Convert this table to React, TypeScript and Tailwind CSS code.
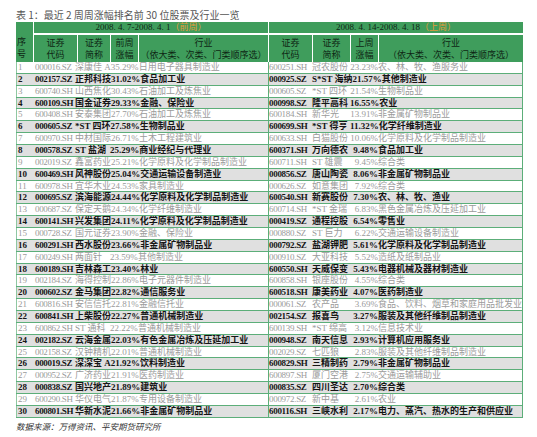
import React from 'react';
import clsx from 'clsx';

type Row = [string, string, string, string];

// 前周 2008.4.7-2008.4.11
const prevWeek: Row[] = [
  ['000016.SZ', '深康佳 A', '35.29%', '日用电子器具制造业'],
  ['002157.SZ', '正邦科技', '31.02%', '食品加工业'],
  ['600740.SH', '山西焦化', '30.43%', '石油加工及炼焦业'],
  ['600109.SH', '国金证券', '29.33%', '金融、保险业'],
  ['600408.SH', '安泰集团', '27.70%', '石油加工及炼焦业'],
  ['000605.SZ', '*ST 四环', '27.58%', '生物制品业'],
  ['600970.SH', '中材国际', '26.71%', '土木工程建筑业'],
  ['000578.SZ', 'ST 盐湖', '25.29%', '商业经纪与代理业'],
  ['002019.SZ', '鑫富药业', '25.21%', '化学原料及化学制品制造业'],
  ['600469.SH', '风神股份', '25.04%', '交通运输设备制造业'],
  ['600978.SH', '宜华木业', '24.53%', '家具制造业'],
  ['000695.SZ', '滨海能源', '24.44%', '化学原料及化学制品制造业'],
  ['000687.SZ', '保定天鹅', '24.34%', '化学纤维制造业'],
  ['600141.SH', '兴发集团', '24.11%', '化学原料及化学制品制造业'],
  ['000728.SZ', '国元证券', '23.90%', '金融、保险业'],
  ['600291.SH', '西水股份', '23.66%', '非金属矿物制品业'],
  ['600249.SH', '两面针', '23.59%', '其他制造业'],
  ['600189.SH', '吉林森工', '23.40%', '林业'],
  ['002184.SZ', '海得控制', '22.86%', '电子元器件制造业'],
  ['000602.SZ', '金马集团', '22.82%', '通信服务业'],
  ['600816.SH', '安信信托', '22.81%', '金融信托业'],
  ['600841.SH', '上柴股份', '22.27%', '普通机械制造业'],
  ['600862.SH', 'ST 通科', '22.22%', '普通机械制造业'],
  ['002182.SZ', '云海金属', '22.03%', '有色金属冶炼及压延加工业'],
  ['002158.SZ', '汉钟精机', '22.01%', '普通机械制造业'],
  ['000019.SZ', '深深宝 A', '21.92%', '饮料制造业'],
  ['000952.SZ', '广济药业', '21.91%', '医药制造业'],
  ['000838.SZ', '国兴地产', '21.89%', '建筑业'],
  ['600290.SH', '华仪电气', '21.87%', '专用设备制造业'],
  ['600801.SH', '华新水泥', '21.66%', '非金属矿物制品业'],
];

// 上周 2008.4.14-2008.4.18
const lastWeek: Row[] = [
  ['600251.SH', '冠农股份', '23.23%', '农、林、牧、渔服务业'],
  ['000925.SZ', 'S*ST 海纳', '21.57%', '其他制造业'],
  ['000605.SZ', '*ST 四环', '21.54%', '生物制品业'],
  ['000998.SZ', '隆平高科', '16.55%', '农业'],
  ['600184.SH', '新华光', '13.91%', '非金属矿物制品业'],
  ['600699.SH', '*ST 得亨', '11.32%', '化学纤维制造业'],
  ['600633.SH', '白猫股份', '10.06%', '化学原料及化学制品制造业'],
  ['600371.SH', '万向德农', '9.48%', '食品加工业'],
  ['600711.SH', 'ST 雄震', '9.45%', '综合类'],
  ['000856.SZ', '唐山陶瓷', '8.06%', '非金属矿物制品业'],
  ['000626.SZ', '如意集团', '7.92%', '综合类'],
  ['600540.SH', '新赛股份', '7.30%', '农、林、牧、渔业'],
  ['600714.SH', '*ST 金瑞', '6.83%', '黑色金属冶炼及压延加工业'],
  ['000419.SZ', '通程控股', '6.54%', '零售业'],
  ['000880.SZ', 'ST 巨力', '6.22%', '交通运输设备制造业'],
  ['000792.SZ', '盐湖钾肥', '5.61%', '化学原料及化学制品制造业'],
  ['000910.SZ', '大亚科技', '5.52%', '造纸及纸制品业'],
  ['600550.SH', '天威保变', '5.43%', '电器机械及器材制造业'],
  ['600858.SH', '银座股份', '4.55%', '综合类'],
  ['600518.SH', '康美药业', '4.07%', '医药制造业'],
  ['000061.SZ', '农产品', '3.69%', '食品、饮料、烟草和家庭用品批发业'],
  ['002154.SZ', '报喜鸟', '3.27%', '服装及其他纤维制品制造业'],
  ['600139.SH', '*ST 绵高', '3.12%', '信息技术业'],
  ['000948.SZ', '南天信息', '2.93%', '计算机应用服务业'],
  ['002029.SZ', '七匹狼', '2.83%', '服装及其他纤维制品制造业'],
  ['600829.SH', '三精制药', '2.79%', '非金属矿物制品业'],
  ['600897.SH', '厦门空港', '2.75%', '交通运输辅助业'],
  ['000835.SZ', '四川圣达', '2.70%', '综合类'],
  ['000972.SZ', '新中基', '2.61%', '农业'],
  ['600116.SH', '三峡水利', '2.17%', '电力、蒸汽、热水的生产和供应业'],
];

const HeadCell = ({ w, top, bottom, last }: { w: string; top: string; bottom: string; last?: boolean }) => (
  <div className={clsx('flex flex-col items-center justify-center border-l border-white', w, last && 'flex-1')}>
    <span>{top}</span>
    <span>{bottom}</span>
  </div>
);

const App: React.FC = () => {
  return (
    <div className="w-[537px] h-[437px] bg-white pt-[7px] pl-[16px] font-['Liberation_Serif','Noto_Sans_CJK_SC',serif]">
      {/* title */}
      <div className="h-[15px] leading-[15px] text-[10px] text-[#555] font-['Noto_Sans_CJK_SC',sans-serif]">
        表 1：最近 2 周周涨幅排名前 30 位股票及行业一览
      </div>

      <div className="w-[507px]">
        {/* header */}
        <div className="flex h-[40px] bg-[#3f9d5c] text-[9px] text-[#0e2614]">
          <div className="w-[17px] flex flex-col justify-end pb-[2px] pl-[1px] leading-[12px]">
            <span>序</span>
            <span>号</span>
          </div>

          <div className="w-[235px] flex flex-col border-l border-white">
            <div className="h-[11px] leading-[11px] text-center">
              2008. 4. 7-2008. 4. 1<span className="text-[#e39a3a]">（前周）</span>
            </div>
            <div className="h-[2px] bg-white" />
            <div className="flex flex-1 leading-[12px] -ml-px">
              <HeadCell w="w-[44px]" top="证券" bottom="代码" />
              <HeadCell w="w-[33px]" top="证券" bottom="简称" />
              <HeadCell w="w-[28px]" top="前周" bottom="涨幅" />
              <HeadCell w="" top="行业" bottom="（依大类、次类、门类顺序选）" last />
            </div>
          </div>

          <div className="w-[255px] flex flex-col border-l border-white">
            <div className="h-[11px] leading-[11px] text-center">
              2008. 4. 14-2008. 4. 18<span className="text-[#e39a3a]">（上周）</span>
            </div>
            <div className="h-[2px] bg-white" />
            <div className="flex flex-1 leading-[12px] -ml-px">
              <HeadCell w="w-[44px]" top="证券" bottom="代码" />
              <HeadCell w="w-[38px]" top="证券" bottom="简称" />
              <HeadCell w="w-[28px]" top="上周" bottom="涨幅" />
              <HeadCell w="" top="行业" bottom="（依大类、次类、门类顺序选）" last />
            </div>
          </div>
        </div>

        {/* rows */}
        {prevWeek.map((l, i) => {
          const r = lastWeek[i];
          const strong = i % 2 === 1;
          return (
            <div
              key={i}
              className={clsx(
                'flex h-[11.87px] leading-[11px] text-[9px] whitespace-nowrap border-b border-[#5cae79]',
                strong ? 'bg-[#e0e0e0] font-bold text-[#151515]' : 'bg-white text-[#9b9b9b]'
              )}
            >
              <div className="w-[17px] pl-[1px] border-l border-[#8fc7a2]">{i + 1}</div>
              <div className="w-[235px] flex pl-[2px] overflow-hidden">
                <span className="min-w-[40px] tracking-[-0.35px]">{l[0]}</span>
                <span className="min-w-[35px]">{l[1]}</span>
                <span className="min-w-[28px]">{l[2]}</span>
                <span>{l[3]}</span>
              </div>
              <div className="w-[255px] flex overflow-hidden border-l border-[#5cae79] border-r">
                <span className="min-w-[43px] tracking-[-0.3px]">{r[0]}</span>
                <span className="min-w-[38px]">{r[1]}</span>
                <span className="min-w-[28px] text-right">{r[2]}</span>
                <span>{r[3]}</span>
              </div>
            </div>
          );
        })}
      </div>

      {/* source */}
      <div className="mt-[2px] h-[12px] leading-[12px] text-[8.5px] italic text-[#333] font-['Noto_Sans_CJK_SC',sans-serif]">
        数据来源：万得资讯、平安期货研究所
      </div>
    </div>
  );
};

export default App;
